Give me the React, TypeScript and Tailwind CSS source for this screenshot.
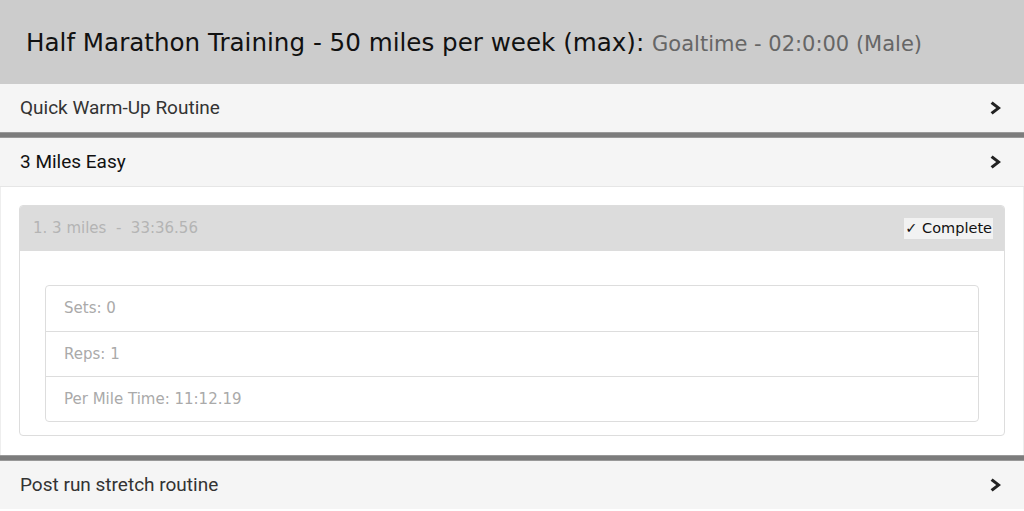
const Chevron = () => (
  <svg width="13" height="16" viewBox="0 0 13 16" className="mr-[1px]">
    <path d="M2.6 1.5 L11 8 L2.6 14.5 L0.6 12.2 L6.2 8 L0.6 3.8 Z" fill="#222" />
  </svg>
);

const Row = ({ title, dark }: { title: string; dark?: boolean }) => (
  <div
    className={`flex h-[48px] items-center justify-between bg-[#f5f5f5] px-[20px] font-['Roboto',sans-serif] text-[19px] ${
      dark ? 'text-[#111]' : 'text-[#333]'
    }`}
  >
    <span>{title}</span>
    <Chevron />
  </div>
);

const Divider = () => (
  <div className="h-[6px] border-y border-[#999] bg-[#7c7c7c]" />
);

const App = () => {
  const details = ['Sets: 0', 'Reps: 1', 'Per Mile Time: 11:12.19'];

  return (
    <div className="h-[511px] w-[1024px] overflow-hidden bg-white">
      <div className="flex h-[84px] items-center bg-[#cccccc] px-[26px] pt-[2px] font-['DejaVu_Sans',sans-serif]">
        <h1 className="text-[24.6px] text-[#111]">
          Half Marathon Training - 50 miles per week (max):{' '}
          <span className="text-[21px] text-[#666]">Goaltime - 02:0:00 (Male)</span>
        </h1>
      </div>

      <Row title="Quick Warm-Up Routine" />
      <Divider />
      <div className="border-b border-[#e6e6e6]">
        <Row title="3 Miles Easy" dark />
      </div>

      <div className="border-x border-[#eeeeee] px-[18px] pt-[18px] pb-[19px] font-['DejaVu_Sans',sans-serif]">
        <div className="overflow-hidden rounded-[4px] border border-[#dddddd]">
          <div className="flex h-[45px] items-center justify-between bg-[#dcdcdc] pl-[13px] pr-[11px] text-[15px]">
            <span className="whitespace-pre text-[#b4b4b4]">1. 3 miles  -  33:36.56</span>
            <span className="bg-[#f2f2f2] px-[1px] text-[14.5px] text-[#111]">✓ Complete</span>
          </div>
          <div className="px-[25px] pt-[34px] pb-[13px]">
            <ul className="rounded-[4px] border border-[#dddddd]">
              {details.map((d, i) => (
                <li
                  key={d}
                  className={`flex h-[45px] items-center px-[18px] text-[15px] text-[#aaaaaa] ${
                    i > 0 ? 'border-t border-[#dddddd]' : ''
                  }`}
                >
                  {d}
                </li>
              ))}
            </ul>
          </div>
        </div>
      </div>

      <Divider />
      <Row title="Post run stretch routine" />
    </div>
  );
};

export default App;
